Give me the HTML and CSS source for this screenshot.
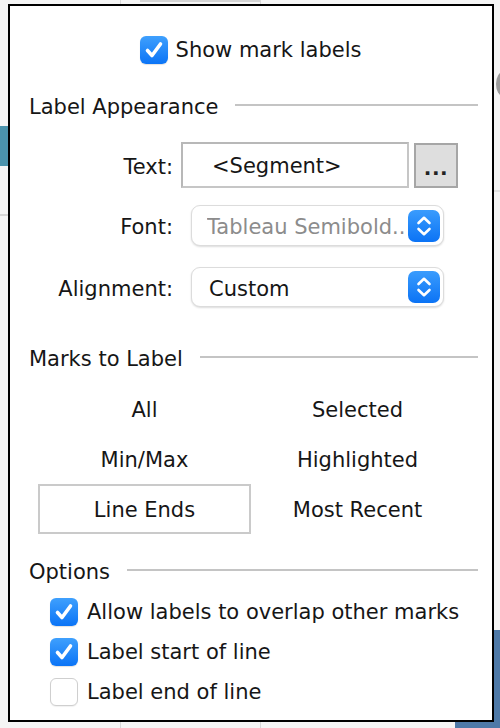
FILE: index.html
```html
<!DOCTYPE html>
<html>
<head>
<meta charset="utf-8">
<link rel="stylesheet" href="styles.css">
</head>
<body>
<div class="backdrop">
  <div class="bg-top-bar"></div>
  <div class="bg-vline bg-vline-a"></div>
  <div class="bg-vline bg-vline-b"></div>
  <div class="bg-teal"></div>
  <div class="bg-hline-left"></div>
  <div class="bg-circle"></div>
  <div class="bg-hline-right"></div>
  <div class="bg-blue"></div>
</div>
<div class="panel">
  <label class="show-row">
    <span class="cb checked"><svg viewBox="0 0 28 28" width="28" height="28"><path d="M7.5 14.5 L12 19.5 L20.5 8" fill="none" stroke="#fff" stroke-width="3.6" stroke-linecap="round" stroke-linejoin="round"/></svg></span>
    <span>Show mark labels</span>
  </label>

  <div class="section-head head-appearance"><span>Label Appearance</span><i class="rule"></i></div>

  <div class="form-row row-text">
    <span class="form-label">Text:</span>
    <div class="text-field">&lt;Segment&gt;</div>
    <div class="dots-btn">...</div>
  </div>

  <div class="form-row row-font">
    <span class="form-label">Font:</span>
    <div class="select"><span class="select-value muted">Tableau Semibold..</span><span class="stepper"><svg viewBox="0 0 32 32" width="32" height="32"><path d="M10.5 13 L16 7.8 L21.5 13 M10.5 19 L16 24.2 L21.5 19" fill="none" stroke="#fff" stroke-width="2.6" stroke-linecap="round" stroke-linejoin="round"/></svg></span></div>
  </div>

  <div class="form-row row-align">
    <span class="form-label">Alignment:</span>
    <div class="select"><span class="select-value">Custom</span><span class="stepper"><svg viewBox="0 0 32 32" width="32" height="32"><path d="M10.5 13 L16 7.8 L21.5 13 M10.5 19 L16 24.2 L21.5 19" fill="none" stroke="#fff" stroke-width="2.6" stroke-linecap="round" stroke-linejoin="round"/></svg></span></div>
  </div>

  <div class="section-head head-marks"><span>Marks to Label</span><i class="rule"></i></div>

  <div class="marks-grid">
    <div class="mark-opt">All</div>
    <div class="mark-opt">Selected</div>
    <div class="mark-opt">Min/Max</div>
    <div class="mark-opt">Highlighted</div>
    <div class="mark-opt active">Line Ends</div>
    <div class="mark-opt">Most Recent</div>
  </div>

  <div class="section-head head-options"><span>Options</span><i class="rule"></i></div>

  <div class="options">
    <label class="opt-row"><span class="cb checked"><svg viewBox="0 0 28 28" width="28" height="28"><path d="M7.5 14.5 L12 19.5 L20.5 8" fill="none" stroke="#fff" stroke-width="3.6" stroke-linecap="round" stroke-linejoin="round"/></svg></span><span>Allow labels to overlap other marks</span></label>
    <label class="opt-row"><span class="cb checked"><svg viewBox="0 0 28 28" width="28" height="28"><path d="M7.5 14.5 L12 19.5 L20.5 8" fill="none" stroke="#fff" stroke-width="3.6" stroke-linecap="round" stroke-linejoin="round"/></svg></span><span>Label start of line</span></label>
    <label class="opt-row"><span class="cb"></span><span>Label end of line</span></label>
  </div>
</div>
</body>
</html>
```
FILE: styles.css
```css
html, body {
  margin: 0;
  padding: 0;
}
body {
  width: 500px;
  height: 728px;
  overflow: hidden;
  background: #f5f5f5;
  font-family: "DejaVu Sans", "Liberation Sans", sans-serif;
  font-size: 21px;
  color: #161616;
  position: relative;
}

/* backdrop (the workspace behind the floating dialog) */
.backdrop { position: absolute; inset: 0; }
.bg-top-bar { position: absolute; left: 140px; top: 0; width: 120px; height: 2px; background: #d4d4d4; }
.bg-vline { position: absolute; top: 0; width: 1px; height: 728px; background: #d8d8d8; }
.bg-vline-a { left: 120px; }
.bg-vline-b { left: 260px; }
.bg-teal { position: absolute; left: 0; top: 126px; width: 8px; height: 40px; background: #4b93ac; }
.bg-hline-left { position: absolute; left: 0; top: 214px; width: 8px; height: 2px; background: #d6d6d6; }
.bg-circle { position: absolute; left: 496px; top: 72px; width: 14px; height: 24px; border-radius: 50%; background: #9a9a9a; }
.bg-hline-right { position: absolute; left: 494px; top: 190px; width: 6px; height: 2px; background: #e2e2e2; }
.bg-blue { position: absolute; left: 455px; top: 630px; width: 45px; height: 98px; background: #4e79a7; }

/* dialog */
.panel {
  position: relative;
  box-sizing: border-box;
  margin: 4px 0 0 8px;
  width: 486px;
  height: 718px;
  border: 2px solid #000;
  background: #fff;
  padding: 0 14px 0 19px;
  display: flex;
  flex-direction: column;
}

.cb {
  box-sizing: border-box;
  width: 28px;
  height: 28px;
  border-radius: 6px;
  flex: none;
  background: #fff;
  border: 1px solid #cfcfcf;
  box-shadow: 0 1px 1px rgba(0,0,0,0.06);
  display: flex;
}
.cb.checked {
  border: none;
  background: linear-gradient(#3fa0fd, #0b74f6);
  box-shadow: 0 1px 1px rgba(0,0,0,0.12);
}

.show-row {
  margin-top: 30px;
  height: 28px;
  display: flex;
  align-items: center;
  justify-content: center;
  gap: 8px;
  padding-right: 6px;
}

.section-head {
  height: 24px;
  display: flex;
  align-items: center;
  line-height: 24px;
}
.section-head .rule {
  flex: 1;
  height: 2px;
  background: #c4c4c4;
  margin-bottom: 5px;
}
.head-appearance { margin-top: 31px; }
.head-appearance .rule { margin-left: 17px; }
.head-marks { margin-top: 40px; }
.head-marks .rule { margin-left: 17px; }
.head-options { margin-top: 26px; }
.head-options .rule { margin-left: 17px; }

.form-row {
  display: flex;
  align-items: center;
  margin-left: -9px;
}
.form-label {
  width: 153px;
  text-align: right;
  flex: none;
  padding-top: 3px;
  white-space: nowrap;
}
.row-text { margin-top: 23px; height: 46px; }
.row-font { margin-top: 17px; height: 41px; }
.row-align { margin-top: 21px; height: 40px; }

.text-field {
  box-sizing: border-box;
  margin-left: 8px;
  width: 228px;
  height: 46px;
  border: 2px solid #c6c6c6;
  border-top-color: #b8b8b8;
  border-left-color: #b8b8b8;
  padding-left: 29px;
  padding-top: 2px;
  line-height: 40px;
}
.dots-btn {
  box-sizing: border-box;
  margin-left: 5px;
  width: 44px;
  height: 45px;
  background: #dedede;
  border: 2px solid #a6a6a6;
  text-align: center;
  line-height: 46px;
  font-size: 20px;
  font-weight: bold;
  letter-spacing: 0.5px;
  color: #222;
}

.select {
  box-sizing: border-box;
  margin-left: 18px;
  width: 253px;
  height: 100%;
  background: #fff;
  border: 1px solid #dcdcdc;
  border-radius: 9px;
  box-shadow: 0 1px 2px rgba(0,0,0,0.14);
  display: flex;
  align-items: center;
  padding: 0 3px 0 15px;
}
.select-value { flex: 1; padding-top: 3px; white-space: nowrap; overflow: hidden; }
.select-value.muted { color: #8c8c8c; }
.row-align .select-value { padding-left: 2px; }
.stepper {
  width: 32px;
  height: 32px;
  border-radius: 7px;
  background: linear-gradient(#3a9cfd, #0b73f5);
  display: flex;
  flex: none;
}

.marks-grid {
  margin-top: 13px;
  margin-left: 9px;
  display: grid;
  grid-template-columns: 213px 213px;
  grid-auto-rows: 50px;
}
.mark-opt {
  display: flex;
  align-items: center;
  justify-content: center;
  padding-top: 2px;
  box-sizing: border-box;
}
.mark-opt.active {
  border: 2px solid #cacaca;
}

.options {
  margin-top: 14px;
  margin-left: 21px;
  display: flex;
  flex-direction: column;
  gap: 12px;
}
.opt-row {
  display: flex;
  align-items: center;
  gap: 9px;
  height: 28px;
  white-space: nowrap;
}
```
